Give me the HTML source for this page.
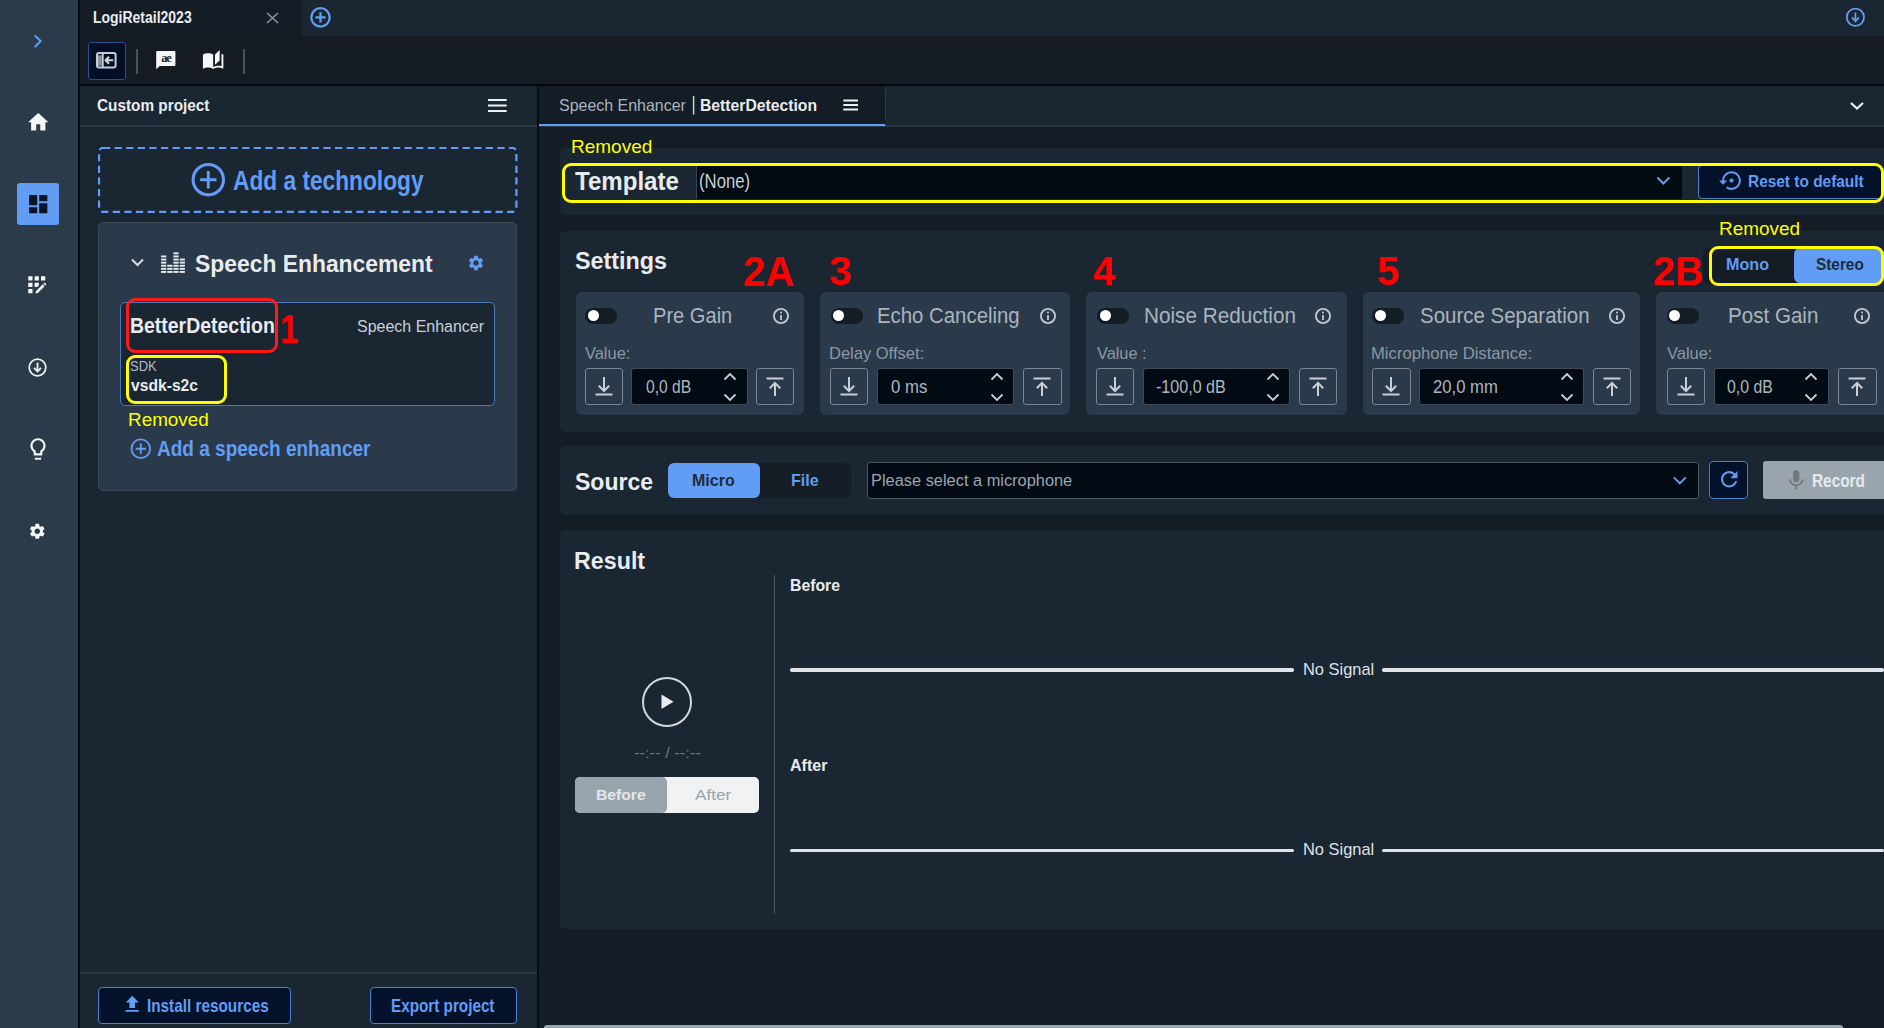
<!DOCTYPE html><html><head><meta charset="utf-8"><style>
html,body{margin:0;padding:0;width:1884px;height:1028px;overflow:hidden;background:#151d25}
body>div,body>svg{position:absolute}
.t{white-space:pre;line-height:1;transform-origin:0 0;font-family:"Liberation Sans",sans-serif}
</style></head><body>
<div style="left:0px;top:0px;width:1884px;height:1028px;background:#141c25"></div>
<div style="left:0px;top:0px;width:78px;height:1028px;background:#2b3b4a"></div>
<div style="left:78px;top:0px;width:2px;height:1028px;background:#030a11"></div>
<div style="left:80px;top:0px;width:1804px;height:36px;background:#1b2633"></div>
<div style="left:80px;top:0px;width:222px;height:36px;background:#141c25"></div>
<div style="left:80px;top:36px;width:1804px;height:48px;background:#141b23"></div>
<div style="left:80px;top:84px;width:1804px;height:2px;background:#04080c"></div>
<div style="left:80px;top:86px;width:457px;height:942px;background:#1b2633"></div>
<div style="left:80px;top:125px;width:457px;height:1.5px;background:#2a3744"></div>
<div style="left:80px;top:972px;width:457px;height:1.5px;background:#2a3744"></div>
<div style="left:537px;top:86px;width:2px;height:942px;background:#040c15"></div>
<div style="left:539px;top:86px;width:1345px;height:40px;background:#1b2633"></div>
<div style="left:539px;top:86px;width:346px;height:38px;background:#141c25"></div>
<div style="left:885px;top:90px;width:1px;height:30px;background:#2e3b48"></div>
<div style="left:539px;top:125px;width:1345px;height:1.5px;background:#2a3744"></div>
<div style="left:539px;top:123.5px;width:346px;height:2.5px;background:#619df5"></div>
<div style="left:560px;top:147.6px;width:1324px;height:67.6px;background:#1b2633;border-radius:5px 0 0 5px"></div>
<div style="left:560px;top:231px;width:1324px;height:200.5px;background:#1b2633;border-radius:5px 0 0 5px"></div>
<div style="left:560px;top:446.4px;width:1324px;height:68.3px;background:#1b2633;border-radius:5px 0 0 5px"></div>
<div style="left:560px;top:530px;width:1324px;height:398.5px;background:#1b2633;border-radius:5px 0 0 5px"></div>
<div style="left:544px;top:1024.5px;width:1299px;height:6px;background:#9aa4ad;border-radius:3px"></div>
<svg style="left:97.6px;top:146.8px;" width="420" height="66" viewBox="0 0 420 66"><rect x="1" y="1" width="417.4" height="63.9" rx="4" fill="none" stroke="#619df5" stroke-width="2.2" stroke-dasharray="7.2 4.4"/></svg>
<div style="left:97.6px;top:222.4px;width:419.4px;height:268.2px;background:#2a3a4a;border:1px solid #3a4958;border-radius:5px;box-sizing:border-box"></div>
<div style="left:119.6px;top:302.3px;width:375.4px;height:104.1px;background:#1b2633;border:1.8px solid #4a78bd;border-radius:5px;box-sizing:border-box"></div>
<div style="left:126.3px;top:297.8px;width:151.4px;height:55.2px;border:3px solid #ff1a1a;border-radius:9px;box-sizing:border-box"></div>
<div style="left:126.3px;top:355.3px;width:101.2px;height:48.4px;border:3px solid #ffff00;border-radius:9px;box-sizing:border-box"></div>
<div style="left:98.3px;top:986.9px;width:192.6px;height:37.2px;background:#03112a;border:1.5px solid #4a80d0;border-radius:4px;box-sizing:border-box"></div>
<div style="left:370.3px;top:986.9px;width:147px;height:37.2px;background:#03112a;border:1.5px solid #4a80d0;border-radius:4px;box-sizing:border-box"></div>
<div style="left:88px;top:42px;width:37.7px;height:37.8px;background:#020f26;border:1.2px solid #24518f;border-radius:3px;box-sizing:border-box"></div>
<div style="left:136px;top:49px;width:1.5px;height:24.5px;background:#46525e"></div>
<div style="left:243px;top:49px;width:1.5px;height:24.5px;background:#46525e"></div>
<div style="left:695.5px;top:166px;width:986.5px;height:33.3px;background:#020a12;border-left:1px solid #3a4654;box-sizing:border-box"></div>
<div style="left:1698.4px;top:165.3px;width:184px;height:33.6px;background:#03112a;border:1px solid #4a80d0;border-radius:4px;box-sizing:border-box"></div>
<div style="left:562px;top:163px;width:1322px;height:39.8px;border:3.2px solid #ffff00;border-radius:9px;box-sizing:border-box"></div>
<div style="left:1703px;top:247.8px;width:181px;height:35px;background:#141c24;border-radius:6px"></div>
<div style="left:1794px;top:248px;width:90px;height:34.5px;background:#619df5;border-radius:6px"></div>
<div style="left:1709.3px;top:245.6px;width:174.7px;height:40.1px;border:3px solid #ffff00;border-radius:9px;box-sizing:border-box"></div>
<div style="left:575.5px;top:292.1px;width:228.70000000000005px;height:122.6px;background:#2a3a4a;border-radius:6px"></div>
<div style="left:585.3px;top:307.7px;width:32px;height:16px;background:#141c24;border-radius:8px"></div>
<div style="left:587.8px;top:310.2px;width:11px;height:11px;background:#ffffff;border-radius:50%"></div>
<svg style="left:772.2px;top:306.7px;" width="18" height="18" viewBox="0 0 18 18"><circle cx="9" cy="9" r="7.1" fill="none" stroke="#bfc5cc" stroke-width="1.9"/><rect x="8.05" y="7.9" width="1.9" height="5" rx="0.5" fill="#bfc5cc"/><circle cx="9" cy="5.6" r="1.05" fill="#bfc5cc"/></svg>
<div style="left:584.6px;top:367.6px;width:38.3px;height:37.9px;border:1.5px solid #7a8590;border-radius:3px;box-sizing:border-box"></div>
<svg style="left:584.6px;top:367.6px;" width="38" height="38" viewBox="0 0 38 38"><path d="M19 9v14M13.8 17.8L19 23l5.2-5.2" fill="none" stroke="#c8ced4" stroke-width="2"/><path d="M10.5 26.5h17" stroke="#c8ced4" stroke-width="2"/></svg>
<div style="left:631.1px;top:368.3px;width:117.19999999999993px;height:36.9px;background:#020b14;border:1.5px solid #404c58;border-radius:3px;box-sizing:border-box"></div>
<svg style="left:723.2px;top:372px;" width="14" height="30" viewBox="0 0 14 30"><path d="M1.5 7.5L7 2l5.5 5.5M1.5 22.5L7 28l5.5-5.5" fill="none" stroke="#c8ced4" stroke-width="1.8"/></svg>
<div style="left:756.2px;top:367.6px;width:38.3px;height:37.9px;border:1.5px solid #7a8590;border-radius:3px;box-sizing:border-box"></div>
<svg style="left:756.2px;top:367.6px;" width="38" height="38" viewBox="0 0 38 38"><path d="M10.5 10.5h17" stroke="#c8ced4" stroke-width="2"/><path d="M19 28V15M13.8 20.2L19 15l5.2 5.2" fill="none" stroke="#c8ced4" stroke-width="2"/></svg>
<div style="left:820.2px;top:292.1px;width:250.29999999999995px;height:122.6px;background:#2a3a4a;border-radius:6px"></div>
<div style="left:830.6px;top:307.7px;width:32px;height:16px;background:#141c24;border-radius:8px"></div>
<div style="left:833.1px;top:310.2px;width:11px;height:11px;background:#ffffff;border-radius:50%"></div>
<svg style="left:1038.5px;top:306.7px;" width="18" height="18" viewBox="0 0 18 18"><circle cx="9" cy="9" r="7.1" fill="none" stroke="#bfc5cc" stroke-width="1.9"/><rect x="8.05" y="7.9" width="1.9" height="5" rx="0.5" fill="#bfc5cc"/><circle cx="9" cy="5.6" r="1.05" fill="#bfc5cc"/></svg>
<div style="left:830px;top:367.6px;width:38.3px;height:37.9px;border:1.5px solid #7a8590;border-radius:3px;box-sizing:border-box"></div>
<svg style="left:830px;top:367.6px;" width="38" height="38" viewBox="0 0 38 38"><path d="M19 9v14M13.8 17.8L19 23l5.2-5.2" fill="none" stroke="#c8ced4" stroke-width="2"/><path d="M10.5 26.5h17" stroke="#c8ced4" stroke-width="2"/></svg>
<div style="left:876.5px;top:368.3px;width:137.79999999999995px;height:36.9px;background:#020b14;border:1.5px solid #404c58;border-radius:3px;box-sizing:border-box"></div>
<svg style="left:989.6px;top:372px;" width="14" height="30" viewBox="0 0 14 30"><path d="M1.5 7.5L7 2l5.5 5.5M1.5 22.5L7 28l5.5-5.5" fill="none" stroke="#c8ced4" stroke-width="1.8"/></svg>
<div style="left:1023.3px;top:367.6px;width:38.3px;height:37.9px;border:1.5px solid #7a8590;border-radius:3px;box-sizing:border-box"></div>
<svg style="left:1023.3px;top:367.6px;" width="38" height="38" viewBox="0 0 38 38"><path d="M10.5 10.5h17" stroke="#c8ced4" stroke-width="2"/><path d="M19 28V15M13.8 20.2L19 15l5.2 5.2" fill="none" stroke="#c8ced4" stroke-width="2"/></svg>
<div style="left:1086.4px;top:292.1px;width:260.29999999999995px;height:122.6px;background:#2a3a4a;border-radius:6px"></div>
<div style="left:1097px;top:307.7px;width:32px;height:16px;background:#141c24;border-radius:8px"></div>
<div style="left:1099.5px;top:310.2px;width:11px;height:11px;background:#ffffff;border-radius:50%"></div>
<svg style="left:1314.3px;top:306.7px;" width="18" height="18" viewBox="0 0 18 18"><circle cx="9" cy="9" r="7.1" fill="none" stroke="#bfc5cc" stroke-width="1.9"/><rect x="8.05" y="7.9" width="1.9" height="5" rx="0.5" fill="#bfc5cc"/><circle cx="9" cy="5.6" r="1.05" fill="#bfc5cc"/></svg>
<div style="left:1096.2px;top:367.6px;width:38.3px;height:37.9px;border:1.5px solid #7a8590;border-radius:3px;box-sizing:border-box"></div>
<svg style="left:1096.2px;top:367.6px;" width="38" height="38" viewBox="0 0 38 38"><path d="M19 9v14M13.8 17.8L19 23l5.2-5.2" fill="none" stroke="#c8ced4" stroke-width="2"/><path d="M10.5 26.5h17" stroke="#c8ced4" stroke-width="2"/></svg>
<div style="left:1143.2px;top:368.3px;width:147.20000000000005px;height:36.9px;background:#020b14;border:1.5px solid #404c58;border-radius:3px;box-sizing:border-box"></div>
<svg style="left:1265.5px;top:372px;" width="14" height="30" viewBox="0 0 14 30"><path d="M1.5 7.5L7 2l5.5 5.5M1.5 22.5L7 28l5.5-5.5" fill="none" stroke="#c8ced4" stroke-width="1.8"/></svg>
<div style="left:1299px;top:367.6px;width:38.3px;height:37.9px;border:1.5px solid #7a8590;border-radius:3px;box-sizing:border-box"></div>
<svg style="left:1299px;top:367.6px;" width="38" height="38" viewBox="0 0 38 38"><path d="M10.5 10.5h17" stroke="#c8ced4" stroke-width="2"/><path d="M19 28V15M13.8 20.2L19 15l5.2 5.2" fill="none" stroke="#c8ced4" stroke-width="2"/></svg>
<div style="left:1362.5px;top:292.1px;width:277.9000000000001px;height:122.6px;background:#2a3a4a;border-radius:6px"></div>
<div style="left:1372.4px;top:307.7px;width:32px;height:16px;background:#141c24;border-radius:8px"></div>
<div style="left:1374.9px;top:310.2px;width:11px;height:11px;background:#ffffff;border-radius:50%"></div>
<svg style="left:1608px;top:306.7px;" width="18" height="18" viewBox="0 0 18 18"><circle cx="9" cy="9" r="7.1" fill="none" stroke="#bfc5cc" stroke-width="1.9"/><rect x="8.05" y="7.9" width="1.9" height="5" rx="0.5" fill="#bfc5cc"/><circle cx="9" cy="5.6" r="1.05" fill="#bfc5cc"/></svg>
<div style="left:1372.4px;top:367.6px;width:38.3px;height:37.9px;border:1.5px solid #7a8590;border-radius:3px;box-sizing:border-box"></div>
<svg style="left:1372.4px;top:367.6px;" width="38" height="38" viewBox="0 0 38 38"><path d="M19 9v14M13.8 17.8L19 23l5.2-5.2" fill="none" stroke="#c8ced4" stroke-width="2"/><path d="M10.5 26.5h17" stroke="#c8ced4" stroke-width="2"/></svg>
<div style="left:1419.3px;top:368.3px;width:165.20000000000005px;height:36.9px;background:#020b14;border:1.5px solid #404c58;border-radius:3px;box-sizing:border-box"></div>
<svg style="left:1559.6px;top:372px;" width="14" height="30" viewBox="0 0 14 30"><path d="M1.5 7.5L7 2l5.5 5.5M1.5 22.5L7 28l5.5-5.5" fill="none" stroke="#c8ced4" stroke-width="1.8"/></svg>
<div style="left:1593px;top:367.6px;width:38.3px;height:37.9px;border:1.5px solid #7a8590;border-radius:3px;box-sizing:border-box"></div>
<svg style="left:1593px;top:367.6px;" width="38" height="38" viewBox="0 0 38 38"><path d="M10.5 10.5h17" stroke="#c8ced4" stroke-width="2"/><path d="M19 28V15M13.8 20.2L19 15l5.2 5.2" fill="none" stroke="#c8ced4" stroke-width="2"/></svg>
<div style="left:1656.2px;top:292.1px;width:243.79999999999995px;height:122.6px;background:#2a3a4a;border-radius:6px"></div>
<div style="left:1666.9px;top:307.7px;width:32px;height:16px;background:#141c24;border-radius:8px"></div>
<div style="left:1669.4px;top:310.2px;width:11px;height:11px;background:#ffffff;border-radius:50%"></div>
<svg style="left:1853.3px;top:306.7px;" width="18" height="18" viewBox="0 0 18 18"><circle cx="9" cy="9" r="7.1" fill="none" stroke="#bfc5cc" stroke-width="1.9"/><rect x="8.05" y="7.9" width="1.9" height="5" rx="0.5" fill="#bfc5cc"/><circle cx="9" cy="5.6" r="1.05" fill="#bfc5cc"/></svg>
<div style="left:1666.9px;top:367.6px;width:38.3px;height:37.9px;border:1.5px solid #7a8590;border-radius:3px;box-sizing:border-box"></div>
<svg style="left:1666.9px;top:367.6px;" width="38" height="38" viewBox="0 0 38 38"><path d="M19 9v14M13.8 17.8L19 23l5.2-5.2" fill="none" stroke="#c8ced4" stroke-width="2"/><path d="M10.5 26.5h17" stroke="#c8ced4" stroke-width="2"/></svg>
<div style="left:1713.8px;top:368.3px;width:115.20000000000005px;height:36.9px;background:#020b14;border:1.5px solid #404c58;border-radius:3px;box-sizing:border-box"></div>
<svg style="left:1804px;top:372px;" width="14" height="30" viewBox="0 0 14 30"><path d="M1.5 7.5L7 2l5.5 5.5M1.5 22.5L7 28l5.5-5.5" fill="none" stroke="#c8ced4" stroke-width="1.8"/></svg>
<div style="left:1838.4px;top:367.6px;width:38.3px;height:37.9px;border:1.5px solid #7a8590;border-radius:3px;box-sizing:border-box"></div>
<svg style="left:1838.4px;top:367.6px;" width="38" height="38" viewBox="0 0 38 38"><path d="M10.5 10.5h17" stroke="#c8ced4" stroke-width="2"/><path d="M19 28V15M13.8 20.2L19 15l5.2 5.2" fill="none" stroke="#c8ced4" stroke-width="2"/></svg>
<div style="left:667.6px;top:462.7px;width:183.4px;height:35.3px;background:#151d26;border-radius:6px"></div>
<div style="left:667.6px;top:462.7px;width:92.4px;height:35.3px;background:#619df5;border-radius:6px"></div>
<div style="left:866.7px;top:461.5px;width:832.4px;height:37.5px;background:#020b14;border:1.5px solid #4a5561;border-radius:3px;box-sizing:border-box"></div>
<div style="left:1709.3px;top:461.4px;width:38.4px;height:38.1px;background:#03112a;border:1.5px solid #4a80d0;border-radius:4px;box-sizing:border-box"></div>
<div style="left:1762.5px;top:461.4px;width:130px;height:37.7px;background:#9aa4ad;border-radius:3px"></div>
<div style="left:773.7px;top:575.3px;width:1.3px;height:338.3px;background:#4a5663"></div>
<div style="left:790.4px;top:668.4px;width:503.6px;height:3.4px;background:#e0e4e8;border-radius:1.7px"></div>
<div style="left:1382.2px;top:668.4px;width:502px;height:3.4px;background:#e0e4e8;border-radius:1.7px"></div>
<div style="left:790.4px;top:848.6px;width:503.6px;height:3.4px;background:#e0e4e8;border-radius:1.7px"></div>
<div style="left:1382.2px;top:848.6px;width:502px;height:3.4px;background:#e0e4e8;border-radius:1.7px"></div>
<svg style="left:641px;top:676px;" width="52" height="52" viewBox="0 0 52 52"><circle cx="26" cy="26" r="24" fill="none" stroke="#d4d8dc" stroke-width="2"/><path d="M20.5 18.5v14.5l12-7.25z" fill="#e8ecef"/></svg>
<div style="left:575px;top:777.2px;width:183.6px;height:35.8px;background:#f0f2f4;border-radius:5px"></div>
<div style="left:575px;top:777.2px;width:91.5px;height:35.8px;background:#9aa4ad;border-radius:5px"></div>
<div class="t" style="left:633.8px;top:745px;font-size:15px;color:#6c7884;transform:scaleX(1.1)">--:-- / --:--</div>
<svg style="left:30px;top:30px" width="16" height="20" viewBox="0 0 16 20"><path d="M5.3 6.1L10.6 11.1l-5.3 5.3" fill="none" stroke="#619df5" stroke-width="2.1" stroke-linecap="round"/></svg>
<svg style="left:25.5px;top:110.3px" width="24.5" height="24.5" viewBox="0 0 24 24"><path d="M10 20v-6h4v6h5v-8h3L12 3 2 12h3v8z" fill="#f4f6f8"/></svg>
<div style="left:16.8px;top:182.7px;width:42.4px;height:42.5px;background:#629df5;border-radius:3px"></div>
<svg style="left:25.6px;top:192.1px" width="24.4" height="24.4" viewBox="0 0 24 24"><path d="M3 13h8V3H3v10zm0 8h8v-6H3v6zm10 0h8V11h-8v10zm0-18v6h8V3h-8z" fill="#081527"/></svg>
<svg style="left:24.3px;top:272px" width="25.5" height="25.5" viewBox="0 0 24 24"><path d="M10 4h4v4h-4zM4 16h4v4H4zM4 10h4v4H4zM4 4h4v4H4zM14 12.42V10h-4v4h2.42zM20.88 11.29l-1.17-1.17c-.16-.16-.42-.16-.58 0l-.88.88L20 12.75l.88-.88c.16-.16.16-.42 0-.58zM11 18.25V20h1.75l6.67-6.67-1.75-1.75zM16 4h4v4h-4z" fill="#f4f6f8"/></svg>
<svg style="left:26px;top:356px" width="23" height="23" viewBox="0 0 23 23"><circle cx="11.5" cy="11.5" r="8.3" fill="none" stroke="#f0f2f4" stroke-width="1.7"/><path d="M11.5 6.6v8.8" stroke="#f0f2f4" stroke-width="1.8"/><path d="M8 11.9l3.5 3.6 3.5-3.6" fill="none" stroke="#f0f2f4" stroke-width="1.8"/></svg>
<svg style="left:24.5px;top:436px" width="26" height="26" viewBox="0 0 24 24"><path d="M9 21c0 .55.45 1 1 1h4c.55 0 1-.45 1-1v-1H9v1zm3-19C8.14 2 5 5.14 5 9c0 2.38 1.19 4.47 3 5.74V17c0 .55.45 1 1 1h6c.55 0 1-.45 1-1v-2.26c1.81-1.27 3-3.36 3-5.74 0-3.86-3.14-7-7-7zm2.85 11.1l-.85.6V16h-4v-2.3l-.85-.6C7.8 12.16 7 10.63 7 9c0-2.76 2.24-5 5-5s5 2.24 5 5c0 1.63-.8 3.16-2.15 4.1z" fill="#f4f6f8"/></svg>
<svg style="left:28.2px;top:521.5px" width="18.6" height="18.6" viewBox="0 0 24 24"><path d="M19.14 12.94c.04-.3.06-.61.06-.94 0-.32-.02-.64-.07-.94l2.03-1.58c.18-.14.23-.41.12-.61l-1.92-3.32c-.12-.22-.37-.29-.59-.22l-2.39.96c-.5-.38-1.03-.7-1.62-.94l-.36-2.54c-.04-.24-.24-.41-.48-.41h-3.84c-.24 0-.43.17-.47.41l-.36 2.54c-.59.24-1.13.57-1.62.94l-2.39-.96c-.22-.08-.47 0-.59.22L2.74 8.87c-.12.21-.08.47.12.61l2.03 1.58c-.05.3-.09.63-.09.94s.02.64.07.94l-2.03 1.58c-.18.14-.23.41-.12.61l1.92 3.32c.12.22.37.29.59.22l2.39-.96c.5.38 1.03.7 1.62.94l.36 2.54c.05.24.24.41.48.41h3.84c.24 0 .44-.17.47-.41l.36-2.54c.59-.24 1.13-.56 1.62-.94l2.39.96c.22.08.47 0 .59-.22l1.92-3.32c.12-.22.07-.47-.12-.61l-2.01-1.58zM12 15.6c-1.98 0-3.6-1.62-3.6-3.6s1.62-3.6 3.6-3.6 3.6 1.62 3.6 3.6-1.62 3.6-3.6 3.6z" fill="#f4f6f8"/></svg>
<svg style="left:94px;top:49px" width="25" height="24" viewBox="0 0 25 24"><rect x="4" y="6.3" width="3.6" height="10.4" fill="#8f959d"/><rect x="3" y="4" width="18.6" height="14.6" rx="2" fill="none" stroke="#c9cdd3" stroke-width="2"/><path d="M8.7 4v14.6" stroke="#c9cdd3" stroke-width="2"/><path d="M11.6 11.3h7.6M15 7.8l-3.4 3.5 3.4 3.5" fill="none" stroke="#d6dade" stroke-width="2"/></svg>
<svg style="left:150px;top:45px" width="30" height="30" viewBox="0 0 30 30"><path d="M7.2 6.1h17.2a1 1 0 0 1 1 1v12.8a1 1 0 0 1-1 1H9.8l-3.6 3.3V7.1a1 1 0 0 1 1-1z" fill="#f6f7f8"/><text x="15.9" y="16.9" font-family="Liberation Serif" font-weight="700" font-size="12.5" letter-spacing="-1.3" text-anchor="middle" fill="#1d242c">ae</text></svg>
<svg style="left:202.1px;top:49.4px" width="22.3" height="22.3" viewBox="0 0 24 24"><path d="M19 1l-5 5v11l5-4.5V1zM1 6v14.65c0 .25.25.5.5.5.1 0 .15-.05.25-.05C3.1 20.45 5.05 20 6.5 20c1.95 0 4.05.4 5.5 1.5V6c-1.45-1.1-3.55-1.5-5.5-1.5S2.45 4.9 1 6zm22 13.5V6c-.6-.45-1.25-.75-2-1v13.5c-1.1-.35-2.3-.5-3.5-.5-1.7 0-4.15.65-5.5 1.5v2c1.35-.85 3.8-1.5 5.5-1.5 1.65 0 3.35.3 4.75 1.05.1.05.15.05.25.05.25 0 .5-.25.5-.5v-1.1z" fill="#f6f7f8"/></svg>
<svg style="left:262px;top:12px" width="22" height="16" viewBox="0 0 22 16"><path d="M5 1l11 10M16 1L5 11" stroke="#8a949e" stroke-width="1.6"/></svg>
<svg style="left:309px;top:6px" width="24" height="24" viewBox="0 0 24 24"><circle cx="11.5" cy="11.4" r="9.2" fill="none" stroke="#619df5" stroke-width="2.3"/><path d="M11.5 6.3v10.2M6.4 11.4h10.2" stroke="#619df5" stroke-width="2.3"/></svg>
<svg style="left:1843px;top:5px" width="25" height="25" viewBox="0 0 25 25"><circle cx="12.4" cy="12.3" r="8.6" fill="none" stroke="#619df5" stroke-width="1.8"/><path d="M12.4 7.5v8.2" stroke="#619df5" stroke-width="1.8"/><path d="M8.9 12.4l3.5 3.9 3.5-3.9" fill="none" stroke="#619df5" stroke-width="1.8"/></svg>
<svg style="left:486px;top:96px" width="23" height="20" viewBox="0 0 23 20"><path d="M2 4h18.7M2 9.5h18.7M2 15h18.7" stroke="#eef0f2" stroke-width="2.2"/></svg>
<svg style="left:190px;top:161px" width="38" height="38" viewBox="0 0 38 38"><circle cx="18.3" cy="18.7" r="15.2" fill="none" stroke="#619df5" stroke-width="3.1"/><path d="M18.3 10.1v17.4M10.1 18.7h16.4" stroke="#619df5" stroke-width="2.9"/></svg>
<svg style="left:128px;top:254px" width="20" height="18" viewBox="0 0 20 18"><path d="M4 5.5l5.5 5.5 5.5-5.5" fill="none" stroke="#d8dde2" stroke-width="2"/></svg>
<svg style="left:160px;top:250px" width="27" height="25" viewBox="0 0 27 25"><rect x="1.10" y="21.00" width="5.2" height="1.9" fill="#e8ebee"/><rect x="1.10" y="17.90" width="5.2" height="1.9" fill="#e8ebee"/><rect x="1.10" y="14.80" width="5.2" height="1.9" fill="#e8ebee"/><rect x="1.10" y="11.70" width="5.2" height="1.9" fill="#e8ebee"/><rect x="1.10" y="8.60" width="5.2" height="1.9" fill="#e8ebee"/><rect x="1.10" y="5.50" width="5.2" height="1.9" fill="#e8ebee"/><rect x="7.30" y="21.00" width="5.2" height="1.9" fill="#e8ebee"/><rect x="7.30" y="17.90" width="5.2" height="1.9" fill="#e8ebee"/><rect x="7.30" y="14.80" width="5.2" height="1.9" fill="#e8ebee"/><rect x="13.40" y="21.00" width="5.2" height="1.9" fill="#e8ebee"/><rect x="13.40" y="17.90" width="5.2" height="1.9" fill="#e8ebee"/><rect x="13.40" y="14.80" width="5.2" height="1.9" fill="#e8ebee"/><rect x="13.40" y="11.70" width="5.2" height="1.9" fill="#e8ebee"/><rect x="13.40" y="8.60" width="5.2" height="1.9" fill="#e8ebee"/><rect x="13.40" y="5.50" width="5.2" height="1.9" fill="#e8ebee"/><rect x="13.40" y="2.40" width="5.2" height="1.9" fill="#e8ebee"/><rect x="19.70" y="21.00" width="5.2" height="1.9" fill="#e8ebee"/><rect x="19.70" y="17.90" width="5.2" height="1.9" fill="#e8ebee"/><rect x="19.70" y="14.80" width="5.2" height="1.9" fill="#e8ebee"/><rect x="19.70" y="11.70" width="5.2" height="1.9" fill="#e8ebee"/><rect x="19.70" y="8.60" width="5.2" height="1.9" fill="#e8ebee"/></svg>
<svg style="left:466.5px;top:253.7px" width="18" height="18" viewBox="0 0 24 24"><path d="M19.14 12.94c.04-.3.06-.61.06-.94 0-.32-.02-.64-.07-.94l2.03-1.58c.18-.14.23-.41.12-.61l-1.92-3.32c-.12-.22-.37-.29-.59-.22l-2.39.96c-.5-.38-1.03-.7-1.62-.94l-.36-2.54c-.04-.24-.24-.41-.48-.41h-3.84c-.24 0-.43.17-.47.41l-.36 2.54c-.59.24-1.13.57-1.62.94l-2.39-.96c-.22-.08-.47 0-.59.22L2.74 8.87c-.12.21-.08.47.12.61l2.03 1.58c-.05.3-.09.63-.09.94s.02.64.07.94l-2.03 1.58c-.18.14-.23.41-.12.61l1.92 3.32c.12.22.37.29.59.22l2.39-.96c.5.38 1.03.7 1.62.94l.36 2.54c.05.24.24.41.48.41h3.84c.24 0 .44-.17.47-.41l.36-2.54c.59-.24 1.13-.56 1.62-.94l2.39.96c.22.08.47 0 .59-.22l1.92-3.32c.12-.22.07-.47-.12-.61l-2.01-1.58zM12 15.6c-1.98 0-3.6-1.62-3.6-3.6s1.62-3.6 3.6-3.6 3.6 1.62 3.6 3.6-1.62 3.6-3.6 3.6z" fill="#619df5"/></svg>
<svg style="left:128px;top:436px" width="26" height="26" viewBox="0 0 26 26"><circle cx="12.8" cy="12.7" r="9.3" fill="none" stroke="#619df5" stroke-width="1.8"/><path d="M12.8 7.6v10.2M7.7 12.7h10.2" stroke="#619df5" stroke-width="1.9"/></svg>
<svg style="left:120.5px;top:992.5px" width="22.5" height="22.5" viewBox="0 0 24 24"><path d="M9 16h6v-6h4l-7-7-7 7h4zm-4 2h14v2H5z" fill="#619df5"/></svg>
<svg style="left:690px;top:94px" width="8" height="24" viewBox="0 0 8 24"><path d="M3.6 2v18.5" stroke="#d0d5da" stroke-width="1.5"/></svg>
<svg style="left:840px;top:96px" width="22" height="18" viewBox="0 0 22 18"><path d="M3.3 4.6h14.7M3.3 9h14.7M3.3 13.4h14.7" stroke="#eef0f2" stroke-width="2"/></svg>
<svg style="left:1846px;top:98px" width="22" height="16" viewBox="0 0 22 16"><path d="M5 5l6 5.5 6-5.5" fill="none" stroke="#e8ecef" stroke-width="2.2"/></svg>
<svg style="left:1654px;top:172px" width="20" height="16" viewBox="0 0 20 16"><path d="M3.4 5.5l6 6 6-6" fill="none" stroke="#619df5" stroke-width="2"/></svg>
<svg style="left:1719.4px;top:168.1px" width="25" height="25" viewBox="0 0 24 24"><path d="M14 12c0-1.1-.9-2-2-2s-2 .9-2 2 .9 2 2 2 2-.9 2-2zm-2-9c-4.97 0-9 4.03-9 9H0l4 4 4-4H5c0-3.87 3.13-7 7-7s7 3.13 7 7-3.13 7-7 7c-1.51 0-2.91-.49-4.06-1.3l-1.42 1.44C8.04 20.3 9.94 21 12 21c4.97 0 9-4.03 9-9s-4.03-9-9-9z" fill="#5e98ee"/></svg>
<svg style="left:1670px;top:472px" width="20" height="16" viewBox="0 0 20 16"><path d="M3.8 5.4l6 6 6-6" fill="none" stroke="#619df5" stroke-width="2"/></svg>
<svg style="left:1716.5px;top:466.8px" width="24.5" height="24.5" viewBox="0 0 24 24"><path d="M17.65 6.35C16.2 4.9 14.21 4 12 4c-4.42 0-7.99 3.58-7.99 8s3.57 8 7.99 8c3.73 0 6.84-2.55 7.73-6h-2.08c-.82 2.33-3.04 4-5.65 4-3.31 0-6-2.69-6-6s2.69-6 6-6c1.66 0 3.14.69 4.22 1.78L13 11h7V4l-2.35 2.35z" fill="#619df5"/></svg>
<svg style="left:1784.4px;top:467.8px" width="24.5" height="24.5" viewBox="0 0 24 24"><path d="M12 14c1.66 0 2.99-1.34 2.99-3L15 5c0-1.66-1.34-3-3-3S9 3.34 9 5v6c0 1.66 1.34 3 3 3zm5.3-3c0 3-2.54 5.1-5.3 5.1S6.7 14 6.7 11H5c0 3.41 2.72 6.23 6 6.72V21h2v-3.28c3.28-.48 6-3.3 6-6.72h-1.7z" fill="#74787d"/></svg>
<div class="t" style="left:92.82px;top:10px;font-size:15.6px;font-weight:700;transform:scaleX(0.8965);color:#e9ecef">LogiRetail2023</div>
<div class="t" style="left:97.39px;top:98px;font-size:16.9px;font-weight:700;transform:scaleX(0.9079);color:#e9ecef">Custom project</div>
<div class="t" style="left:232.62px;top:168px;font-size:26.8px;font-weight:700;transform:scaleX(0.8477);color:#619df5">Add a technology</div>
<div class="t" style="left:195.31px;top:252px;font-size:23.9px;font-weight:700;transform:scaleX(0.9573);color:#e9ecef">Speech Enhancement</div>
<div class="t" style="left:129.84px;top:315px;font-size:21.2px;font-weight:700;transform:scaleX(0.9176);color:#e9ecef">BetterDetection</div>
<div class="t" style="left:279.71px;top:310px;font-size:39.8px;font-weight:700;transform:scaleX(0.8340);color:#ff0000">1</div>
<div class="t" style="left:357.10px;top:318px;font-size:17.2px;font-weight:400;transform:scaleX(0.9296);color:#c9cfd5">Speech Enhancer</div>
<div class="t" style="left:130.35px;top:358px;font-size:15.2px;font-weight:400;transform:scaleX(0.8529);color:#b4bcc4">SDK</div>
<div class="t" style="left:130.84px;top:377px;font-size:17.0px;font-weight:700;transform:scaleX(0.9212);color:#e9ecef">vsdk-s2c</div>
<div class="t" style="left:128.49px;top:411px;font-size:18.7px;font-weight:400;transform:scaleX(1.0100);color:#ffff00">Removed</div>
<div class="t" style="left:156.93px;top:438px;font-size:21.2px;font-weight:700;transform:scaleX(0.8974);color:#619df5">Add a speech enhancer</div>
<div class="t" style="left:147.43px;top:998px;font-size:17.9px;font-weight:700;transform:scaleX(0.8558);color:#619df5">Install resources</div>
<div class="t" style="left:391.03px;top:998px;font-size:17.9px;font-weight:700;transform:scaleX(0.8530);color:#619df5">Export project</div>
<div class="t" style="left:558.70px;top:97px;font-size:16.5px;font-weight:400;transform:scaleX(0.9668);color:#aab4be">Speech Enhancer</div>
<div class="t" style="left:699.80px;top:97px;font-size:16.5px;font-weight:700;transform:scaleX(0.9526);color:#e9ecef">BetterDetection</div>
<div class="t" style="left:571.48px;top:138px;font-size:18.2px;font-weight:400;transform:scaleX(1.0444);color:#ffff00">Removed</div>
<div class="t" style="left:574.96px;top:169px;font-size:24.9px;font-weight:700;transform:scaleX(0.9669);color:#e9ecef">Template</div>
<div class="t" style="left:699.00px;top:172px;font-size:19.7px;font-weight:400;transform:scaleX(0.8489);color:#c9cfd5">(None)</div>
<div class="t" style="left:1747.72px;top:174px;font-size:15.9px;font-weight:700;transform:scaleX(0.9705);color:#619df5">Reset to default</div>
<div class="t" style="left:574.90px;top:249px;font-size:24.4px;font-weight:700;transform:scaleX(0.9573);color:#e9ecef">Settings</div>
<div class="t" style="left:743.30px;top:251px;font-size:41.6px;font-weight:700;transform:scaleX(0.9655);color:#ff0000">2A</div>
<div class="t" style="left:828.78px;top:252px;font-size:39.8px;font-weight:700;transform:scaleX(1.0251);color:#ff0000">3</div>
<div class="t" style="left:1093.00px;top:252px;font-size:39.8px;font-weight:700;transform:scaleX(1.0050);color:#ff0000">4</div>
<div class="t" style="left:1377.00px;top:252px;font-size:39.8px;font-weight:700;transform:scaleX(1.0050);color:#ff0000">5</div>
<div class="t" style="left:1653.41px;top:252px;font-size:39.8px;font-weight:700;transform:scaleX(0.9925);color:#ff0000">2B</div>
<div class="t" style="left:1719.19px;top:221px;font-size:17.5px;font-weight:400;transform:scaleX(1.0806);color:#ffff00">Removed</div>
<div class="t" style="left:1726.17px;top:256px;font-size:16.3px;font-weight:700;transform:scaleX(0.9921);color:#619df5">Mono</div>
<div class="t" style="left:1816.14px;top:256px;font-size:16.3px;font-weight:700;transform:scaleX(0.9424);color:#1f2b38">Stereo</div>
<div class="t" style="left:652.79px;top:305px;font-size:21.2px;font-weight:400;transform:scaleX(0.9484);color:#aab4be">Pre Gain</div>
<div class="t" style="left:877.07px;top:305px;font-size:21.2px;font-weight:400;transform:scaleX(0.9613);color:#aab4be">Echo Canceling</div>
<div class="t" style="left:1143.64px;top:305px;font-size:21.2px;font-weight:400;transform:scaleX(0.9775);color:#aab4be">Noise Reduction</div>
<div class="t" style="left:1419.58px;top:305px;font-size:21.2px;font-weight:400;transform:scaleX(0.9659);color:#aab4be">Source Separation</div>
<div class="t" style="left:1728.35px;top:305px;font-size:21.2px;font-weight:400;transform:scaleX(0.9711);color:#aab4be">Post Gain</div>
<div class="t" style="left:585.14px;top:345px;font-size:16.2px;font-weight:400;transform:scaleX(1.0141);color:#8b97a3">Value:</div>
<div class="t" style="left:829.28px;top:345px;font-size:16.2px;font-weight:400;transform:scaleX(1.0192);color:#8b97a3">Delay Offset:</div>
<div class="t" style="left:1096.84px;top:345px;font-size:16.2px;font-weight:400;transform:scaleX(1.0078);color:#8b97a3">Value :</div>
<div class="t" style="left:1370.67px;top:345px;font-size:16.2px;font-weight:400;transform:scaleX(1.0286);color:#8b97a3">Microphone Distance:</div>
<div class="t" style="left:1666.84px;top:345px;font-size:16.2px;font-weight:400;transform:scaleX(1.0164);color:#8b97a3">Value:</div>
<div class="t" style="left:646.37px;top:379px;font-size:17.5px;font-weight:400;transform:scaleX(0.8939);color:#aeb7c0">0,0 dB</div>
<div class="t" style="left:891.33px;top:379px;font-size:17.5px;font-weight:400;transform:scaleX(0.9569);color:#aeb7c0">0 ms</div>
<div class="t" style="left:1156.16px;top:379px;font-size:17.5px;font-weight:400;transform:scaleX(0.9191);color:#aeb7c0">-100,0 dB</div>
<div class="t" style="left:1433.37px;top:379px;font-size:17.5px;font-weight:400;transform:scaleX(0.9519);color:#aeb7c0">20,0 mm</div>
<div class="t" style="left:1727.27px;top:379px;font-size:17.5px;font-weight:400;transform:scaleX(0.9061);color:#aeb7c0">0,0 dB</div>
<div class="t" style="left:574.81px;top:470px;font-size:24.2px;font-weight:700;transform:scaleX(0.9518);color:#e9ecef">Source</div>
<div class="t" style="left:691.88px;top:472px;font-size:16.5px;font-weight:700;transform:scaleX(0.9706);color:#1f2b38">Micro</div>
<div class="t" style="left:791.28px;top:472px;font-size:16.5px;font-weight:700;transform:scaleX(0.9727);color:#619df5">File</div>
<div class="t" style="left:871.09px;top:472px;font-size:17.3px;font-weight:400;transform:scaleX(0.9479);color:#9aa5b0">Please select a microphone</div>
<div class="t" style="left:1811.82px;top:472px;font-size:18.6px;font-weight:700;transform:scaleX(0.8268);color:#e6eaee">Record</div>
<div class="t" style="left:573.77px;top:549px;font-size:24.0px;font-weight:700;transform:scaleX(0.9694);color:#e9ecef">Result</div>
<div class="t" style="left:789.60px;top:577px;font-size:16.2px;font-weight:700;transform:scaleX(0.9743);color:#e9ecef">Before</div>
<div class="t" style="left:1302.59px;top:661px;font-size:17.0px;font-weight:400;transform:scaleX(0.9659);color:#dde1e5">No Signal</div>
<div class="t" style="left:789.92px;top:757px;font-size:16.2px;font-weight:700;transform:scaleX(0.9893);color:#e9ecef">After</div>
<div class="t" style="left:1302.59px;top:841px;font-size:17.0px;font-weight:400;transform:scaleX(0.9659);color:#dde1e5">No Signal</div>
<div class="t" style="left:595.60px;top:787px;font-size:15.4px;font-weight:700;transform:scaleX(1.0186);color:#e3e7eb">Before</div>
<div class="t" style="left:694.50px;top:787px;font-size:15.4px;font-weight:400;transform:scaleX(1.1163);color:#9aa4ad">After</div>
</body></html>
